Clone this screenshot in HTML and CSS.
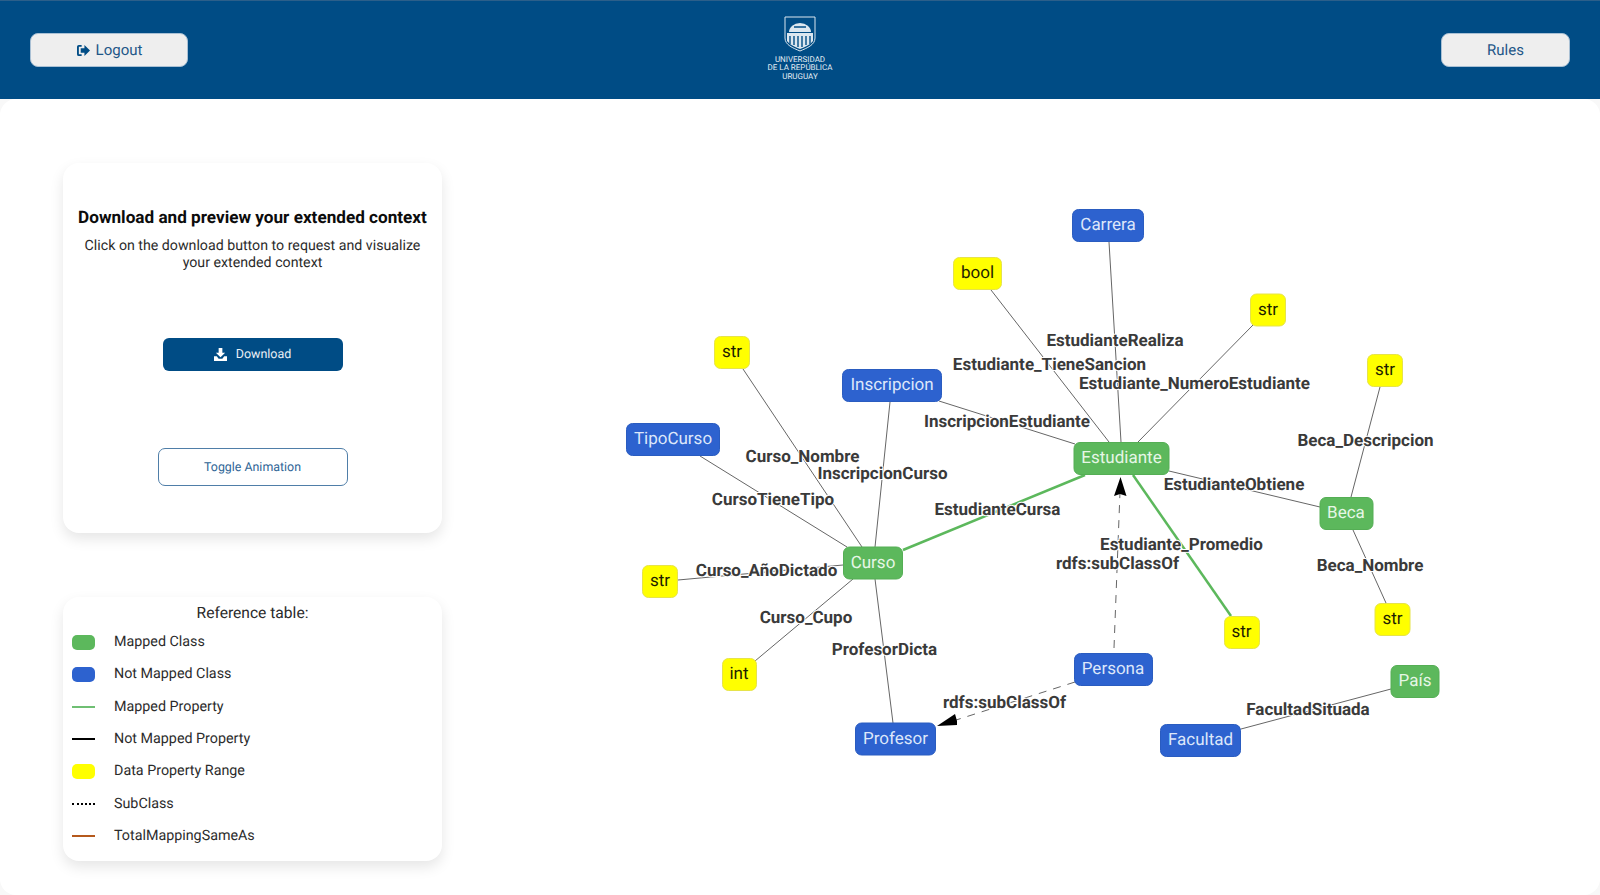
FILE: index.html
```html
<!DOCTYPE html>
<html lang="en">
<head>
    <meta charset="UTF-8">
    <title>Extended context</title>
    <link rel="stylesheet" href="styles.css">
</head>
<body>

<header class="topbar">
    <div class="topSide">
        <button class="topButton logoutButton">
            <svg class="logoutIcon" viewBox="0 0 16 14"><path d="M6 1H3a2 2 0 0 0-2 2v8a2 2 0 0 0 2 2h3v-2H3V3h3z"/><path d="M9 1l6 6-6 6V9.500H5v-5h4z"/></svg>
            Logout
        </button>
    </div>
    <div class="logo">
        <svg class="shield" viewBox="0 0 32 36">
            <path class="shieldEdge" d="M1 1h30v21c0 7-8 10-15 13C9 32 1 29 1 22z"/>
            <path class="shieldFill" d="M5 16a11 9 0 0 1 22 0z"/>
            <path class="shieldFill" d="M3 17h26v8c-3 4-8 6-13 8-5-2-10-4-13-8z"/>
            <path class="shieldLine" d="M6 20v8M10 20v9M14 20v11M18 20v11M22 20v9M26 20v8M10 11h12"/>
        </svg>
        <div class="logoText">UNIVERSIDAD<br>DE LA REPÚBLICA<br>URUGUAY</div>
    </div>
    <div class="topSide topSideRight">
        <button class="topButton rulesButton">Rules</button>
    </div>
</header>

<main class="content">
    <aside class="sidebar">
        <section class="card downloadCard">
            <h2>Download and preview your extended context</h2>
            <p>Click on the download button to request and visualize your extended context</p>
            <button class="downloadButton">
                <svg class="downloadIcon" viewBox="0 0 14 14"><path d="M5 0h4v5h3L7 10 2 5h3z"/><path d="M0 9h3l2 2.500h4L11 9h3v5H0z"/></svg>
                Download
            </button>
            <button class="toggleButton">Toggle Animation</button>
        </section>

        <section class="card legend">
            <div class="legendTitle">Reference table:</div>
            <div class="legendRow"><span class="swatch mapped"></span>Mapped Class</div>
            <div class="legendRow"><span class="swatch notMapped"></span>Not Mapped Class</div>
            <div class="legendRow"><span class="line lineGreen"></span>Mapped Property</div>
            <div class="legendRow"><span class="line lineBlack"></span>Not Mapped Property</div>
            <div class="legendRow"><span class="swatch dataRange"></span>Data Property Range</div>
            <div class="legendRow"><span class="line lineDotted"></span>SubClass</div>
            <div class="legendRow"><span class="line lineOrange"></span>TotalMappingSameAs</div>
        </section>
    </aside>

    <section class="graphArea">
        <svg class="graph" viewBox="460 99 1140 796">
            <!-- edges -->
            <line class="edge" x1="1109" y1="242" x2="1121" y2="442"/>
            <line class="edge" x1="991" y1="290" x2="1109" y2="442"/>
            <line class="edge" x1="1253" y1="325" x2="1138" y2="442"/>
            <line class="edge" x1="743" y1="369" x2="862" y2="547"/>
            <line class="edge" x1="890" y1="402" x2="875" y2="547"/>
            <line class="edge" x1="939" y1="401" x2="1075" y2="444"/>
            <line class="edge" x1="700" y1="456" x2="847" y2="547"/>
            <line class="edge" x1="1169" y1="471" x2="1320" y2="507"/>
            <line class="edge" x1="1380" y1="387" x2="1351" y2="497"/>
            <line class="edge" x1="1353" y1="530" x2="1386" y2="603"/>
            <line class="edge" x1="678" y1="580" x2="843" y2="565"/>
            <line class="edge" x1="853" y1="579" x2="755" y2="661"/>
            <line class="edge" x1="875" y1="579" x2="893" y2="723"/>
            <line class="edge" x1="1241" y1="729" x2="1391" y2="689"/>
            <line class="edge edgeMapped" x1="903" y1="550" x2="1085" y2="475"/>
            <line class="edge edgeMapped" x1="1133" y1="475" x2="1231" y2="616"/>
            <line class="edge edgeSub" x1="1114" y1="648" x2="1120" y2="492"/>
            <line class="edge edgeSub" x1="1075" y1="682" x2="953" y2="721"/>
            <path class="arrow" d="M1120.500 477L1126.500 496L1120 494L1114 496z"/>
            <path class="arrow" d="M937 726L955 714L957 721L957 725z"/>

            <!-- edge labels -->
            <text class="edgeLabel" x="1115" y="346">EstudianteRealiza</text>
            <text class="edgeLabel" x="1049.500" y="370">Estudiante_TieneSancion</text>
            <text class="edgeLabel" x="1194.500" y="388.500">Estudiante_NumeroEstudiante</text>
            <text class="edgeLabel" x="1007" y="426.500">InscripcionEstudiante</text>
            <text class="edgeLabel" x="802.500" y="461.500">Curso_Nombre</text>
            <text class="edgeLabel" x="882.500" y="478.500">InscripcionCurso</text>
            <text class="edgeLabel" x="773" y="505">CursoTieneTipo</text>
            <text class="edgeLabel" x="997.500" y="515">EstudianteCursa</text>
            <text class="edgeLabel" x="1234" y="489.500">EstudianteObtiene</text>
            <text class="edgeLabel" x="1365.500" y="446">Beca_Descripcion</text>
            <text class="edgeLabel" x="1181.500" y="549.500">Estudiante_Promedio</text>
            <text class="edgeLabel" x="1117.500" y="568.500">rdfs:subClassOf</text>
            <text class="edgeLabel" x="1370" y="570.500">Beca_Nombre</text>
            <text class="edgeLabel" x="766.500" y="576">Curso_AñoDictado</text>
            <text class="edgeLabel" x="806" y="623">Curso_Cupo</text>
            <text class="edgeLabel" x="884.500" y="654.500">ProfesorDicta</text>
            <text class="edgeLabel" x="1004.500" y="708">rdfs:subClassOf</text>
            <text class="edgeLabel" x="1308" y="714.500">FacultadSituada</text>

            <!-- nodes -->
            <g class="node nodeBlue"><rect x="1072.500" y="209.500" width="71" height="32" rx="6"/><text x="1108" y="230">Carrera</text></g>
            <g class="node nodeData"><rect x="953.500" y="257.500" width="48" height="32" rx="6"/><text x="977.500" y="278">bool</text></g>
            <g class="node nodeData"><rect x="714.500" y="336.500" width="35" height="32" rx="6"/><text x="732" y="357">str</text></g>
            <g class="node nodeBlue"><rect x="842.500" y="369.500" width="99" height="32" rx="6"/><text x="892" y="390">Inscripcion</text></g>
            <g class="node nodeBlue"><rect x="626.500" y="423.500" width="93" height="32" rx="6"/><text x="673" y="444">TipoCurso</text></g>
            <g class="node nodeGreen"><rect x="843.500" y="547" width="59" height="32" rx="6"/><text x="873" y="567.500">Curso</text></g>
            <g class="node nodeGreen"><rect x="1074" y="442.500" width="95" height="32" rx="6"/><text x="1121.500" y="463">Estudiante</text></g>
            <g class="node nodeData"><rect x="1250.500" y="294" width="35" height="32" rx="6"/><text x="1268" y="314.500">str</text></g>
            <g class="node nodeData"><rect x="1367.500" y="354.500" width="35" height="32" rx="6"/><text x="1385" y="375">str</text></g>
            <g class="node nodeGreen"><rect x="1320" y="497.500" width="53" height="32" rx="6"/><text x="1346" y="518">Beca</text></g>
            <g class="node nodeData"><rect x="642.500" y="565.500" width="35" height="32" rx="6"/><text x="660" y="586">str</text></g>
            <g class="node nodeData"><rect x="722.500" y="658.500" width="34" height="32" rx="6"/><text x="739" y="679">int</text></g>
            <g class="node nodeBlue"><rect x="855.500" y="723" width="80" height="32" rx="6"/><text x="895.500" y="743.500">Profesor</text></g>
            <g class="node nodeBlue"><rect x="1074.500" y="653.500" width="78" height="32" rx="6"/><text x="1113" y="674">Persona</text></g>
            <g class="node nodeData"><rect x="1224.500" y="616.500" width="35" height="32" rx="6"/><text x="1241.500" y="637">str</text></g>
            <g class="node nodeData"><rect x="1375" y="603.500" width="35" height="32" rx="6"/><text x="1392.500" y="624">str</text></g>
            <g class="node nodeGreen"><rect x="1391" y="665.500" width="48" height="32" rx="6"/><text x="1415" y="686">País</text></g>
            <g class="node nodeBlue"><rect x="1160.500" y="724.500" width="80" height="32" rx="6"/><text x="1200.500" y="745">Facultad</text></g>
        </svg>
    </section>
</main>

</body>
</html>
```

FILE: styles.css
```css
* {
    box-sizing: border-box;
}
body {
    margin: 0;
    display: flex;
    flex-direction: column;
    height: 895px;
    overflow: hidden;
    background-color: #f8f8f8;
    font-family: Roboto, "Liberation Sans", sans-serif;
    color: #2b2b2b;
    text-rendering: geometricPrecision;
}
button {
    font-family: inherit;
    text-rendering: inherit;
    cursor: pointer;
}

.topbar {
    height: 99px;
    flex-shrink: 0;
    display: grid;
    grid-template-columns: 1fr auto 1fr;
    align-items: center;
    padding: 0 30px;
    background-color: #004c85;
    border-top: 1px solid #2c5f8a;
}
.topSide {
    display: flex;
}
.topSideRight {
    justify-content: flex-end;
}
.topButton {
    height: 34px;
    border: 1px solid #a9c0d4;
    border-radius: 8px;
    background-color: #eeeeee;
    color: #1f5788;
    font-size: 15px;
    display: flex;
    align-items: center;
    justify-content: center;
    gap: 5px;
}
.logoutButton {
    width: 158px;
}
.rulesButton {
    width: 129px;
}
.logoutIcon {
    width: 15px;
    height: 13px;
    fill: #004c85;
}
.logo {
    display: flex;
    flex-direction: column;
    align-items: center;
    margin-top: -3px;
}
.shield {
    width: 32px;
    height: 36px;
}
.shieldEdge {
    fill: none;
    stroke: #dbe6ef;
    stroke-width: 1;
}
.shieldFill {
    fill: #dbe6ef;
}
.shieldLine {
    fill: none;
    stroke: #004c85;
    stroke-width: 1.400;
}
.logoText {
    margin-top: 4px;
    color: #e4edf4;
    font-size: 8px;
    line-height: 8.500px;
    text-align: center;
}

.content {
    flex: 1;
    display: flex;
    background-color: #ffffff;
    border-radius: 16px;
    overflow: hidden;
}
.sidebar {
    width: 460px;
    flex-shrink: 0;
    padding: 64px 0 0 63px;
    display: flex;
    flex-direction: column;
    gap: 64px;
}
.card {
    width: 379px;
    background-color: #ffffff;
    border-radius: 16px;
    box-shadow: 0 6px 14px rgba(0, 0, 0, 0.1);
}
.downloadCard {
    height: 370px;
    display: flex;
    flex-direction: column;
    align-items: center;
    padding-top: 45px;
}
.downloadCard h2 {
    margin: 0;
    color: #0c0c0c;
    font-size: 17.150px;
    line-height: 20px;
    font-weight: 700;
    white-space: nowrap;
}
.downloadCard p {
    margin: 10px 0 0;
    width: 352px;
    font-size: 14.200px;
    line-height: 17px;
    text-align: center;
}
.downloadButton {
    width: 180px;
    height: 33px;
    margin-top: 66px;
    border: none;
    border-radius: 6px;
    background-color: #004c85;
    color: #e8eff5;
    font-size: 12.500px;
    display: flex;
    align-items: center;
    justify-content: center;
    gap: 9px;
}
.downloadIcon {
    width: 13px;
    height: 13px;
    fill: #ffffff;
}
.toggleButton {
    width: 190px;
    height: 38px;
    margin-top: 77px;
    border: 1px solid #4f7ea8;
    border-radius: 7px;
    background-color: #ffffff;
    color: #2f6596;
    font-size: 12.400px;
}

.legend {
    height: 264px;
    padding: 6px 9px 0;
    font-size: 14.300px;
}
.legendTitle {
    height: 23px;
    line-height: 20px;
    text-align: center;
    font-size: 15.600px;
}
.legendRow {
    height: 32.300px;
    display: flex;
    align-items: center;
    gap: 19px;
}
.swatch {
    width: 23px;
    height: 15px;
    border-radius: 5px;
}
.mapped {
    background-color: #5cb85c;
}
.notMapped {
    background-color: #2d62cf;
}
.dataRange {
    background-color: #ffff00;
}
.line {
    width: 23px;
    height: 0;
    border-top: 2px solid #000000;
}
.lineGreen {
    border-top-color: #6fbf73;
}
.lineBlack {
    border-top-color: #000000;
}
.lineDotted {
    border-top: 2px dotted #000000;
}
.lineOrange {
    border-top-color: #b5591c;
}

.graphArea {
    flex: 1;
}
.graph {
    display: block;
    width: 1140px;
    height: 796px;
}
.edge {
    stroke: #666666;
    stroke-width: 1;
}
.edgeMapped {
    stroke: #5cb85c;
    stroke-width: 2.500;
}
.edgeSub {
    stroke-dasharray: 8 7;
}
.arrow {
    fill: #000000;
}
.edgeLabel {
    fill: #3a3a3a;
    stroke: #ffffff;
    stroke-width: 2px;
    paint-order: stroke;
    font-size: 17px;
    font-weight: 700;
    text-anchor: middle;
}
.node text {
    font-size: 17px;
    text-anchor: middle;
}
.nodeBlue rect {
    fill: #2d62cf;
    stroke: #2a5cc0;
}
.nodeBlue text {
    fill: #dde7fa;
}
.nodeGreen rect {
    fill: #5cb85c;
    stroke: #55ae55;
}
.nodeGreen text {
    fill: #e6f6e6;
}
.nodeData rect {
    fill: #ffff00;
    stroke: #e6e34a;
}
.nodeData text {
    fill: #1d1d00;
}
```
